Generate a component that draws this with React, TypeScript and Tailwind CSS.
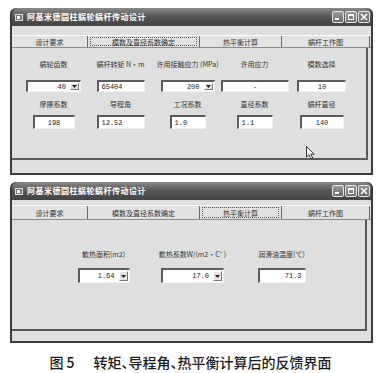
import type { ReactNode } from 'react';

const TITLE = '阿基米德圆柱蜗轮蜗杆传动设计';

function TitleButtons() {
  return (
    <div className="ml-auto flex gap-[1px]">
      <span className="relative h-[12px] w-[12px] rounded-[2px] border border-[#e8e8e8] bg-linear-to-b from-[#9a9a9a] to-[#6c6c6c]">
        <span className="absolute bottom-[2px] left-[2px] h-[2px] w-[4px] bg-white" />
      </span>
      <span className="flex h-[12px] w-[12px] items-center justify-center rounded-[2px] border border-[#e8e8e8] bg-linear-to-b from-[#9a9a9a] to-[#6c6c6c]">
        <span className="h-[6px] w-[6px] border border-t-2 border-white" />
      </span>
      <span className="flex h-[12px] w-[12px] items-center justify-center rounded-[2px] border border-[#e8e8e8] bg-linear-to-b from-[#8e8e8e] to-[#626262]">
        <svg width="8" height="8" viewBox="0 0 8 8">
          <path d="M1 1 L7 7 M7 1 L1 7" stroke="white" strokeWidth="1.6" />
        </svg>
      </span>
    </div>
  );
}

function TitleBar() {
  return (
    <div className="flex h-[18px] items-center rounded-t-[6px] bg-linear-to-b from-[#8a8a8a] via-[#555555] to-[#434343] pl-[3px] pr-[1px]">
      <span className="mr-[4px] flex h-[7px] w-[8px] items-center border border-[#dddddd] bg-[#777]">
        <span className="ml-[1px] h-[3px] w-[3px] bg-white" />
      </span>
      <span className="text-[8px] leading-[10px] font-bold tracking-[0.5px] text-white">{TITLE}</span>
      <TitleButtons />
    </div>
  );
}

const TAB_WIDTHS = [76, 112, 82, 88];
const TAB_NAMES = ['设计要求', '模数及直径系数确定', '热平衡计算', '蜗杆工作图'];

function Tabs({ selected, h }: { selected: number; h: number }) {
  return (
    <div
      className="flex border-t border-b border-t-white border-b-[#8c8c8c] bg-[#e2e2e2]"
      style={{ height: h }}
    >
      {TAB_NAMES.map((name, i) => (
        <div
          key={name}
          className="flex items-center justify-center border-r border-[#6a6a6a] px-[2px] py-[1px]"
          style={{ width: TAB_WIDTHS[i] }}
        >
          <span
            className={`flex h-full w-full items-center justify-center text-[7px] leading-[8px] text-[#333] ${
              i === selected ? 'border border-dotted border-[#555]' : ''
            }`}
          >
            {name}
          </span>
        </div>
      ))}
    </div>
  );
}

function Field({
  w,
  h,
  value,
  align = 'left',
  combo = false,
}: {
  w: number;
  h: number;
  value: string;
  align?: 'left' | 'center' | 'right';
  combo?: boolean;
}) {
  const justify = align === 'center' ? 'justify-center' : align === 'right' ? 'justify-end' : 'justify-start';
  return (
    <div
      className="flex border-t-2 border-l-2 border-r border-b border-t-[#5c5c5c] border-l-[#5c5c5c] border-r-[#f2f2f2] border-b-[#f2f2f2] bg-white"
      style={{ width: w, height: h }}
    >
      <div className={`flex flex-1 items-center px-[3px] font-['Liberation_Mono',monospace] text-[7px] leading-[8px] text-[#222] ${justify}`}>
        {value}
      </div>
      {combo && (
        <div className="m-[1px] flex w-[9px] items-center justify-center border border-t-white border-l-white border-r-[#777] border-b-[#777] bg-[#e4e4e4]">
          <svg width="5" height="3" viewBox="0 0 5 3">
            <path d="M0 0 H5 L2.5 3 Z" fill="#222" />
          </svg>
        </div>
      )}
    </div>
  );
}

function Cell({ label, children, gap }: { label: string; children: ReactNode; gap: number }) {
  return (
    <div className="flex flex-col items-center">
      <span className="h-[9px] whitespace-nowrap text-[7px] leading-[9px] text-[#333]">{label}</span>
      <div style={{ marginTop: gap }}>{children}</div>
    </div>
  );
}

function Window({
  height,
  children,
}: {
  height: number;
  children: ReactNode;
}) {
  return (
    <div
      className="flex w-[363px] flex-col rounded-t-[6px] bg-[#3c3c3c] px-[2px] pb-[2px]"
      style={{ height }}
    >
      <TitleBar />
      <div className="flex-1 bg-[#dfdfdf]">{children}</div>
    </div>
  );
}

function Cursor() {
  return (
    <svg className="absolute left-[306px] top-[146px]" width="10" height="14" viewBox="0 0 10 14">
      <path d="M0.5 0.5 L0.5 11 L3 8.8 L5 13 L6.8 12.2 L4.8 8.2 L8.2 8.2 Z" fill="white" stroke="#333" strokeWidth="1" />
    </svg>
  );
}

export default function App() {
  return (
    <div className="relative h-[373px] w-[381px] bg-white pl-[10px] pt-[8px] font-['Noto_Sans_CJK_SC','Noto_Sans',sans-serif]">
      <Window height={167}>
        <div className="pt-[9px]">
          <Tabs selected={1} h={13} />
          <div className="mr-[3px] h-[112px] border-r-2 border-b-2 border-[#5a5a5a] pl-[8px] pt-[12px]">
            <div className="grid grid-cols-[repeat(5,67px)]">
              <Cell label="蜗轮齿数" gap={11}>
                <Field w={55} h={12} value="40" align="right" combo />
              </Cell>
              <Cell label="蜗杆转矩 N·m" gap={11}>
                <Field w={48} h={12} value="65404" />
              </Cell>
              <Cell label="许用接触应力 (MPa)" gap={11}>
                <Field w={54} h={12} value="200" align="right" combo />
              </Cell>
              <Cell label="许用应力" gap={11}>
                <Field w={68} h={12} value="-" align="center" />
              </Cell>
              <Cell label="模数选择" gap={11}>
                <Field w={49} h={12} value="10" align="center" />
              </Cell>
            </div>
            <div className="mt-[8px] grid grid-cols-[repeat(5,67px)]">
              <Cell label="摩擦系数" gap={6}>
                <Field w={42} h={14} value="198" align="center" />
              </Cell>
              <Cell label="导程角" gap={6}>
                <Field w={48} h={14} value="12.52" />
              </Cell>
              <Cell label="工况系数" gap={6}>
                <Field w={36} h={14} value="1.0" />
              </Cell>
              <Cell label="直径系数" gap={6}>
                <Field w={36} h={14} value="1.1" />
              </Cell>
              <Cell label="蜗杆直径" gap={6}>
                <Field w={44} h={14} value="140" align="center" />
              </Cell>
            </div>
          </div>
        </div>
      </Window>

      <div className="mt-[7px]">
        <Window height={161}>
          <div className="pt-[5px]">
            <Tabs selected={2} h={15} />
            <div className="mr-[4px] h-[111px] border-r-2 border-b-2 border-[#5a5a5a] pl-[47px] pt-[30px]">
              <div className="grid grid-cols-[repeat(3,89px)]">
                <Cell label="散热面积(m2)" gap={9}>
                  <Field w={52} h={15} value="1.64" align="right" combo />
                </Cell>
                <Cell label="散热系数W/(m2·C° )" gap={9}>
                  <Field w={63} h={15} value="17.0" align="right" combo />
                </Cell>
                <Cell label="润滑油温度(℃)" gap={9}>
                  <Field w={48} h={15} value="71.3" align="right" />
                </Cell>
              </div>
            </div>
          </div>
        </Window>
      </div>

      <div className="mt-[10px] -ml-[10px] flex justify-center text-[14px] leading-[18px] font-medium text-[#1c1c1c] [font-feature-settings:'halt']">
        <span>图 5</span>
        <span className="ml-[19px]">转矩、导程角、热平衡计算后的反馈界面</span>
      </div>

      <Cursor />
    </div>
  );
}
